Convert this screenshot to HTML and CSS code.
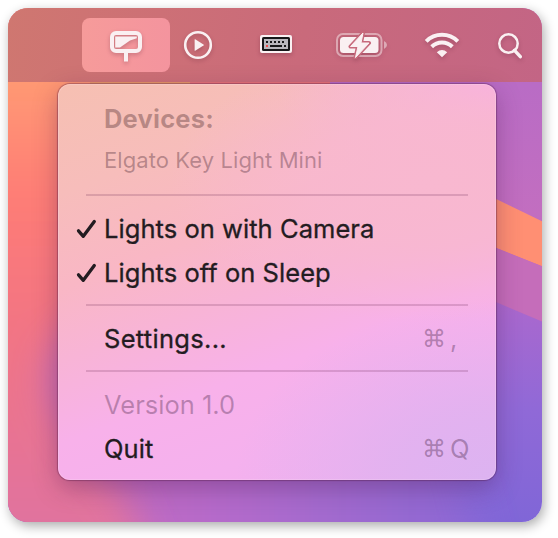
FILE: index.html
```html
<!DOCTYPE html>
<html lang="en">
<head>
<meta charset="utf-8">
<title>Lights menu</title>
<link rel="stylesheet" href="styles.css">
</head>
<body>
<main class="desktop">
  <svg class="wallpaper" viewBox="8 8 534 514" aria-hidden="true">
    <defs>
      <filter id="soft" x="-50%" y="-50%" width="200%" height="200%"><feGaussianBlur stdDeviation="18"/></filter>
      <linearGradient id="leftGlow" gradientUnits="userSpaceOnUse" x1="0" y1="0" x2="0" y2="522">
        <stop offset="0.14" stop-color="#ff9b73"/><stop offset="0.38" stop-color="#fe7c76"/><stop offset="0.65" stop-color="#f17485"/><stop offset="1" stop-color="#e0739f"/>
      </linearGradient>
      <linearGradient id="rightSide" x1="0" y1="0" x2="0" y2="1">
        <stop offset="0.15" stop-color="#b96cc5"/><stop offset="0.4" stop-color="#c26ec0"/><stop offset="0.6" stop-color="#a768cf"/><stop offset="0.78" stop-color="#9069d7"/><stop offset="1" stop-color="#8066d7"/>
      </linearGradient>
      <linearGradient id="lower" gradientUnits="userSpaceOnUse" x1="8" y1="0" x2="542" y2="0">
        <stop offset="0" stop-color="#c96cb2"/><stop offset="0.38" stop-color="#b66bca"/><stop offset="0.7" stop-color="#9969d0"/><stop offset="1" stop-color="#8066d7"/>
      </linearGradient>
    </defs>
    <rect x="8" y="8" width="534" height="514" fill="url(#rightSide)"/>
    <path d="M-40 310H420L490 580H-40Z" fill="url(#lower)" filter="url(#soft)"/>
    <path d="M-80-60H180L140 160 110 290 52 350 46 390 75 450 120 490 160 580H-80Z" fill="url(#leftGlow)" filter="url(#soft)"/>
    <path d="M90 80H190V100H90Z" fill="#e99a68"/>
    <path d="M190 80H330V100H190Z" fill="#e87579"/>
    <path d="M490 196 550 225V269.500L490 245.500Z" fill="#ff8f73"/>
    <path d="M490 245.500 550 269.500V325L490 299.500Z" fill="#c56dba"/>
  </svg>
  <header class="menubar">
    <div class="status status-light">
      <svg width="34" height="32" viewBox="0 0 34 32"><rect x="3" y="2" width="28" height="18" rx="4" fill="none" stroke="#faf0f2" stroke-width="4"/><path d="M6.200 5.500H27.800V7.200L21 9.500 11 16.500H6.200Z" fill="#faf0f2"/><path d="M15 20H19V30.500H15Z" fill="#faf0f2"/></svg>
    </div>
    <div class="status status-play">
      <svg width="30" height="30" viewBox="0 0 30 30"><circle cx="15" cy="15" r="12.800" fill="none" stroke="#faf0f2" stroke-width="2.600"/><path d="M11.600 9.600Q11.600 9 12.200 9.300L20.500 14.400Q21.200 15 20.500 15.600L12.200 20.700Q11.600 21 11.600 20.400Z" fill="#faf0f2"/></svg>
    </div>
    <div class="status status-keyboard">
      <svg width="34" height="20" viewBox="0 0 34 20"><rect x="1" y="1" width="32" height="18" rx="2" fill="#faf0f2"/><rect x="3" y="3" width="28" height="14" rx="1.500" fill="#171719"/><path d="M5 5H29V15H5Z" fill="#b9b7bd"/><path d="M7 7h2v2H7zm4 0h2v2h-2zm4 0h2v2h-2zm4 0h2v2h-2zm4 0h2v2h-2zM11 11H23V13H11zM25 11H27V13H25Z" fill="#171719"/><path d="M7 11H9V13H7Z" fill="#f14e4d"/></svg>
    </div>
    <div class="status status-battery">
      <svg width="52" height="28" viewBox="0 0 52 28"><rect x="1" y="3" width="44.500" height="22" rx="6" fill="none" stroke="#faf0f2" stroke-opacity=".48" stroke-width="2"/><path d="M48 10Q51 11.500 51 14T48 18Z" fill="#faf0f2" fill-opacity=".5"/><rect x="4" y="6" width="38.500" height="16" rx="3.500" fill="#faf0f2"/><path d="M27 2 14.500 15.500H22L19.500 26.500 33 12H25Z" fill="#faf0f2" stroke="#c76a7c" stroke-width="4" stroke-linejoin="round"/><path d="M27 2 14.500 15.500H22L19.500 26.500 33 12H25Z" fill="#faf0f2" stroke="#faf0f2" stroke-linejoin="round"/></svg>
    </div>
    <div class="status status-wifi">
      <svg width="36" height="28" viewBox="0 0 36 28" fill="none" stroke="#faf0f2" stroke-width="4"><path d="M2.200 10.300C11 1.600 25 1.600 33.800 10.300"/><path d="M7.700 15.800C13.500 10.200 22.500 10.200 28.300 15.800"/><path d="M12.800 21.200Q18 16.600 23.200 21.200L18 26.300Z" fill="#faf0f2" stroke="none"/></svg>
    </div>
    <div class="status status-search">
      <svg width="26" height="28" viewBox="0 0 26 28" fill="none" stroke="#faf0f2"><circle cx="11.500" cy="11.500" r="9.200" stroke-width="2.500"/><path d="M17.500 18.300 23.300 24.700" stroke-width="3.400" stroke-linecap="round"/></svg>
    </div>
  </header>
  <section class="menu">
    <div class="row heading"><span class="label">Devices:</span></div>
    <div class="row device"><span class="label">Elgato Key Light Mini</span></div>
    <hr class="separator">
    <div class="row">
      <svg class="check" width="22" height="22" viewBox="0 0 22 22"><path d="M2.500 12.800 7.300 18.300 18.300 3.500" fill="none" stroke="#231c21" stroke-width="3.300" stroke-linecap="round" stroke-linejoin="round"/></svg>
      <span class="label">Lights on with Camera</span>
    </div>
    <div class="row">
      <svg class="check" width="22" height="22" viewBox="0 0 22 22"><path d="M2.500 12.800 7.300 18.300 18.300 3.500" fill="none" stroke="#231c21" stroke-width="3.300" stroke-linecap="round" stroke-linejoin="round"/></svg>
      <span class="label">Lights off on Sleep</span>
    </div>
    <hr class="separator">
    <div class="row"><span class="label settings">Settings...</span><span class="shortcut"><span class="command">⌘</span><span>,</span></span></div>
    <hr class="separator">
    <div class="row version"><span class="label">Version 1.0</span></div>
    <div class="row"><span class="label">Quit</span><span class="shortcut"><span class="command">⌘</span><span>Q</span></span></div>
  </section>
</main>
</body>
</html>
```
FILE: styles.css
```css
* { box-sizing: border-box; }

body {
  margin: 0;
  height: 538px;
  padding: 8px;
  background: #fff;
  overflow: hidden;
  font-family: Inter, "Liberation Sans", sans-serif;
}

.desktop {
  position: relative;
  isolation: isolate;
  width: 534px;
  height: 514px;
  border-radius: 20px;
  overflow: hidden;
  box-shadow: 2px 4px 12px rgba(0, 0, 0, .33);
}

.wallpaper {
  position: absolute;
  inset: 0;
  z-index: -1;
  width: 534px;
  height: 514px;
}

.menubar {
  display: flex;
  height: 74px;
  padding-top: 10px;
  padding-left: 74px;
  background: linear-gradient(100deg, #cf7770 0%, #cd7076 28%, #c96a7b 55%, #c36585 100%);
}

.status {
  display: flex;
  flex: none;
  align-items: center;
  justify-content: center;
  height: 54px;
}

.status svg { filter: drop-shadow(0 2px 2px rgba(60, 10, 30, .23)); }
.status-light { width: 88px; border-radius: 8px; background: linear-gradient(90deg, #f69b9a, #f4949e); }
.status-light svg { margin-top: 3px; }
.status-play { width: 56px; }
.status-keyboard { width: 100px; }
.status-keyboard svg { margin-top: -2px; }
.status-battery { width: 72px; }
.status-wifi { width: 88px; }
.status-wifi svg { margin-top: -1px; }
.status-search { width: 48px; }
.status-search svg { margin-top: 1px; }

.menu {
  width: 438px;
  height: 396px;
  margin: 2px 0 0 50px;
  padding: 13px 0 9px;
  border-radius: 12px;
  background:
    radial-gradient(ellipse 260px 180px at 100% 100%, #dcb3f1 0%, rgba(223, 178, 240, .8) 40%, rgba(231, 178, 240, 0) 100%),
    radial-gradient(ellipse 260px 140px at 85% 25%, #f8b8d0 0%, rgba(248, 184, 208, .8) 45%, rgba(248, 182, 211, 0) 100%),
    radial-gradient(ellipse 220px 110px at 100% 0%, rgba(248, 175, 232, .9) 0%, rgba(248, 178, 226, 0) 100%),
    linear-gradient(160deg, #f6c0b2 0%, #f7bdbb 20%, #f9b7c5 37%, #f8b4d6 50%, #f8b1ea 65%, #f5b1ee 80%, #efb1ef 100%);
  box-shadow:
    0 0 1px 1px rgba(80, 20, 65, .38),
    0 8px 24px rgba(70, 20, 70, .34),
    inset 0 0 0 1px rgba(255, 230, 245, .22);
}

.row {
  display: flex;
  align-items: center;
  position: relative;
  height: 44px;
  padding: 0 24px 0 46px;
  color: #231c21;
  font-size: 25.5px;
  -webkit-text-stroke: .3px currentColor;
  letter-spacing: .05px;
  line-height: 44px;
  white-space: nowrap;
}

.heading { color: rgba(65, 30, 35, .35); font-weight: 700; letter-spacing: .2px; -webkit-text-stroke: 0; }
.device { padding-bottom: 6px; color: rgba(65, 30, 45, .36); font-size: 22px; letter-spacing: .08px; -webkit-text-stroke: 0; }
.version { color: rgba(65, 30, 65, .34); letter-spacing: 0; -webkit-text-stroke: 0; }
.settings { letter-spacing: .3px; }

.check {
  position: absolute;
  left: 18px;
  top: 11px;
}

.separator {
  height: 2px;
  margin: 9px 28px 11px;
  border: 0;
  background: rgba(95, 30, 75, .19);
}

.shortcut {
  display: grid;
  grid-template-columns: 27px 22px;
  margin-left: auto;
  color: rgba(65, 30, 65, .37);
  -webkit-text-stroke: 0;
}

.command {
  margin-left: -1px;
  font-family: "DejaVu Sans", sans-serif;
  font-size: 24px;
}
```
